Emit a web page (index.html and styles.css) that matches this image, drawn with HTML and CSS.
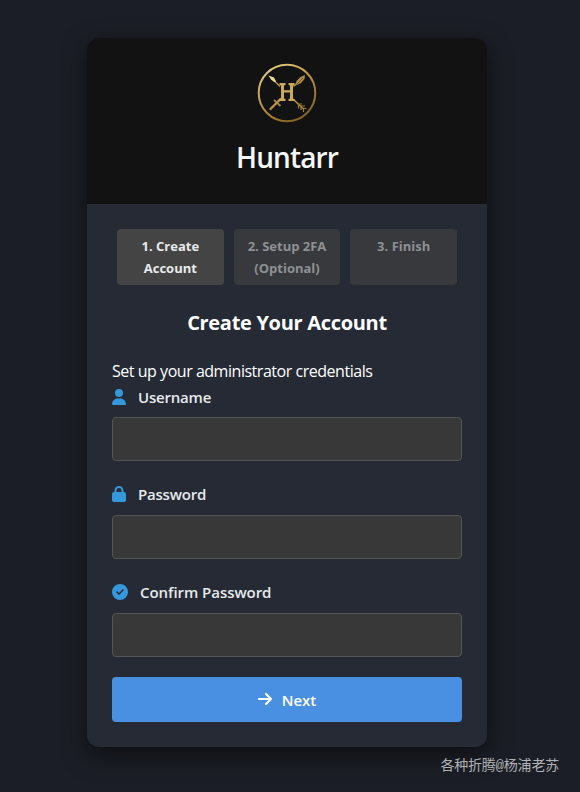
FILE: index.html
```html
<!DOCTYPE html>
<html lang="en">
<head>
<meta charset="utf-8">
<title>Huntarr</title>
<link rel="stylesheet" href="styles.css">
</head>
<body>
<main class="card">
  <header class="header">
    <svg class="logo" viewBox="0 0 60 60" aria-hidden="true">
      <defs>
        <linearGradient id="gold" gradientUnits="userSpaceOnUse" x1="12" y1="0" x2="48" y2="60">
          <stop offset="0" stop-color="#e8d284"/>
          <stop offset=".45" stop-color="#bc9443"/>
          <stop offset="1" stop-color="#79591f"/>
        </linearGradient>
      </defs>
      <circle cx="30" cy="30" r="28.3" fill="none" stroke="url(#gold)" stroke-width="2"/>
      <g fill="none" stroke="#b8964b" stroke-width="1.4">
        <path d="M16 16.500l7 7M36.500 23.500l5-5M36.500 36.500l10 9.500M23.500 36l-4 4"/>
        <path d="M41.500 45.500v-4M44 47v-4M46.500 49v-3.500M40.500 41h4.500M43 43h5M45.500 45.500h4" stroke-width="1.200" stroke="#a07b38"/>
      </g>
      <path d="M11.500 12.500l5.500 2 2 4-1.500.8-3.500-2.800z" fill="#eddb9c"/>
      <path d="M38.500 22.500l1-4.500 4-4 4.500-2-.5 4-3.500 4-4 2z" fill="#b08b43"/>
      <path d="M39.500 21.500l6.500-6.500" stroke="#4d3c1c" stroke-width=".7" fill="none"/>
      <path d="M17 37l6.500 6" stroke="#9f8040" stroke-width="1.800" fill="none"/>
      <path d="M23.500 36l-10 10" stroke="#b3924b" stroke-width="2.400" stroke-linecap="round" fill="none"/>
      <path transform="translate(0 -1)" d="M22.500 21h6v2l-1.500.5v4.700h6V23.500l-1.500-.5v-2h6v2l-1.500.5v13l1.500.5v2h-6v-2l1.500-.5v-6h-6v6l1.500.5v2h-6v-2l1.500-.5v-13l-1.500-.5z" fill="#c9a95e"/>
    </svg>
    <h1 class="brand">Huntarr</h1>
  </header>
  <form class="setup">
    <div class="steps">
      <div class="step step-active">1. Create<br>Account</div>
      <div class="step">2. Setup 2FA<br>(Optional)</div>
      <div class="step">3. Finish</div>
    </div>
    <h2 class="title"><span>Create Your Account</span></h2>
    <p class="intro">Set up your administrator credentials</p>
    <div class="field field-first">
      <label class="label" for="user"><svg class="icon" viewBox="0 0 448 512"><path d="M224 256A128 128 0 1 0 224 0a128 128 0 1 0 0 256zm-45.700 48C79.800 304 0 383.800 0 482.300 0 498.700 13.300 512 29.700 512h388.600c16.400 0 29.700-13.300 29.700-29.700C448 383.800 368.200 304 269.700 304z"/></svg><span>Username</span></label>
      <input class="input" id="user" type="text">
    </div>
    <div class="field">
      <label class="label" for="pass"><svg class="icon" viewBox="0 0 448 512"><path d="M144 144v48h160v-48c0-44.200-35.800-80-80-80s-80 35.800-80 80zM80 192v-48C80 64.500 144.500 0 224 0s144 64.500 144 144v48h16c35.300 0 64 28.700 64 64v192c0 35.300-28.700 64-64 64H64c-35.300 0-64-28.700-64-64V256c0-35.300 28.700-64 64-64z"/></svg><span>Password</span></label>
      <input class="input" id="pass" type="password">
    </div>
    <div class="field">
      <label class="label" for="confirm"><svg class="icon icon-wide" viewBox="0 0 512 512"><path d="M256 512A256 256 0 1 0 256 0a256 256 0 1 0 0 512zM369 209L241 337c-9.400 9.400-24.600 9.400-33.900 0l-64-64c-9.400-9.400-9.400-24.600 0-33.900s24.600-9.400 33.900 0l47 47L335 175c9.400-9.400 24.600-9.400 33.900 0s9.400 24.600 0 33.900z"/></svg><span class="label-confirm">Confirm Password</span></label>
      <input class="input" id="confirm" type="password">
    </div>
    <button class="next" type="button"><svg class="arrow" viewBox="0 0 448 512"><path d="M438.600 278.600c12.500-12.500 12.500-32.800 0-45.300l-160-160c-12.500-12.500-32.800-12.500-45.300 0s-12.500 32.800 0 45.300L338.800 224H32c-17.700 0-32 14.300-32 32s14.300 32 32 32h306.700L233.400 393.400c-12.500 12.500-12.500 32.800 0 45.300s32.800 12.500 45.300 0z"/></svg><span class="next-text">Next</span></button>
  </form>
</main>
<div class="watermark">各种折腾@杨浦老苏</div>
</body>
</html>
```
FILE: styles.css
```css
* { box-sizing: border-box; }
body {
  margin: 0;
  height: 792px;
  padding-top: 38px;
  overflow: hidden;
  background: #1b1e26;
  color: #fff;
  font-family: "Open Sans", "Noto Sans", sans-serif;
}
.card {
  width: 400px;
  height: 709px;
  margin-left: 87px;
  border-radius: 12px;
  overflow: hidden;
  background: #252a34;
  box-shadow: 0 8px 24px rgba(0, 0, 0, .5);
}
.header {
  height: 166px;
  padding-top: 25px;
  background: #121212;
  text-align: center;
}
.logo { display: block; width: 60px; height: 60px; margin: 0 auto; }
.brand {
  margin: 14px 0 0;
  font-size: 28px;
  font-weight: 600;
  line-height: 40px;
  letter-spacing: -.9px;
  color: #f4f6f8;
}
.setup { padding: 25px; }
.steps { display: flex; gap: 10px; padding: 0 5px; }
.step {
  flex: 1;
  height: 56px;
  padding-top: 6px;
  border-radius: 4px;
  background: #38393d;
  color: #8f9094;
  text-align: center;
  white-space: nowrap;
  font-size: 13px;
  font-weight: 700;
  line-height: 22px;
}
.step-active { background: #444; color: #e8eaed; }
.title {
  margin: 22px 0 0;
  text-align: center;
  font-size: 20px;
  font-weight: 700;
  line-height: 32px;
  letter-spacing: -.3px;
}
.intro {
  margin: 19px 0 0;
  font-size: 16px;
  line-height: 26px;
  letter-spacing: -.47px;
  white-space: nowrap;
}
.field { height: 98px; }
.label {
  display: flex;
  align-items: center;
  gap: 12px;
  height: 33px;
  padding-bottom: 9px;
  font-size: 15px;
  font-weight: 600;
  letter-spacing: -.2px;
  color: #e8eaed;
}
.field-first .label { padding-bottom: 7px; }
.label-confirm { letter-spacing: -.05px; }
.icon { width: 14px; height: 16px; fill: #3498db; }
.icon-wide { width: 16px; }
.input {
  display: block;
  width: 100%;
  height: 44px;
  border: 1px solid #555;
  border-radius: 4px;
  outline: 0;
  background: #383838;
}
.next {
  display: flex;
  align-items: center;
  justify-content: center;
  gap: 10px;
  width: 100%;
  height: 45px;
  margin-top: -1px;
  padding-bottom: 2px;
  border: 0;
  border-radius: 4px;
  background: #4a90e2;
  color: #fff;
  font: 600 15px "Open Sans", "Noto Sans", sans-serif;
}
.next-text { padding-top: 2px; }
.arrow { width: 14px; height: 16px; fill: #fff; }
.watermark {
  position: absolute;
  right: 21px;
  bottom: 16px;
  color: #b0b1b4;
  font: 14px/20px "Liberation Mono", "Noto Sans CJK SC", sans-serif;
  letter-spacing: -.2px;
  white-space: nowrap;
}
```
